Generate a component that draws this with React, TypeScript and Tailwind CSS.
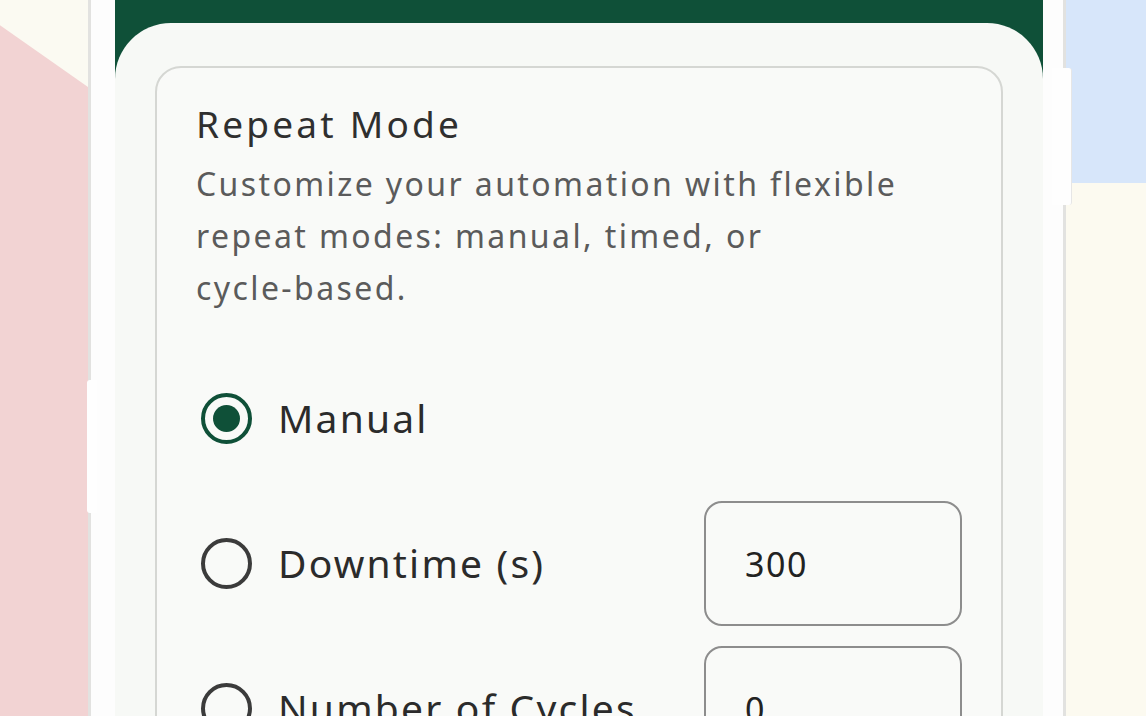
import { useState } from 'react'

type Mode = 'manual' | 'downtime' | 'cycles'

const MODES: { id: Mode; label: string; value?: string }[] = [
  { id: 'manual', label: 'Manual' },
  { id: 'downtime', label: 'Downtime (s)', value: '300' },
  { id: 'cycles', label: 'Number of Cycles', value: '0' },
]

function Radio({ checked }: { checked: boolean }) {
  return (
    <span
      className={`ml-[5px] flex h-[51px] w-[51px] shrink-0 items-center justify-center rounded-full border-[4px] ${
        checked ? 'border-[#0f5038]' : 'border-[#3b3b3b]'
      }`}
    >
      {checked && <span className="h-[27px] w-[27px] rounded-full bg-[#0f5038]" />}
    </span>
  )
}

export default function App() {
  const [mode, setMode] = useState<Mode>('manual')

  return (
    <div className="flex h-[716px] w-[1146px] overflow-hidden bg-[#fbfaf2] font-['Noto_Sans',sans-serif]">
      {/* left backdrop */}
      <div className="w-[88px] shrink-0 bg-[#f2d3d3]">
        <div className="h-[87px] bg-[#fbfaf2] [clip-path:polygon(0_0,100%_0,100%_100%,0_29%)]" />
      </div>

      {/* phone */}
      <div className="relative flex-1 border-x-[3px] border-[#e2e2e0] bg-[#fdfdfd] pl-[24px] pr-[20px]">
        <div className="absolute left-[-4px] top-[380px] h-[133px] w-[10px] rounded-l-[3px] bg-[#fefefe]" />
        <div className="absolute right-[-9px] top-[68px] h-[137px] w-[20px] rounded-r-[3px] border-r border-[#e6e6e6] bg-[#fefefe]" />

        <div className="h-full bg-[#0f5038] pt-[23px]">
          <div className="h-full rounded-t-[56px] bg-[#f7f9f6] px-[40px] pt-[43px]">
            <div className="rounded-[26px] border-2 border-[#d5d7d3] bg-[#f9faf8] px-[39px] pt-[34px] pb-[40px]">
              <h2 className="text-[37px] leading-[44px] tracking-[3.2px] text-[#2f2f2f]">Repeat Mode</h2>
              <p className="mt-[12px] max-w-[740px] text-[32px] leading-[52px] tracking-[2.4px] text-[#5b5b5b]">
                Customize your automation with flexible repeat modes: manual, timed, or{' '}
                <span className="whitespace-nowrap">cycle-based.</span>
              </p>

              <div className="mt-[42px] flex flex-col gap-[20px]">
                {MODES.map(m => (
                  <div key={m.id} className="flex h-[125px] items-center justify-between">
                    <button onClick={() => setMode(m.id)} className="flex items-center">
                      <Radio checked={mode === m.id} />
                      <span className="ml-[26px] text-[39px] tracking-[2.2px] text-[#2b2b2b]">{m.label}</span>
                    </button>
                    {m.value !== undefined && (
                      <input
                        defaultValue={m.value}
                        className="h-[125px] w-[258px] rounded-[18px] border-2 border-[#8d8d8d] bg-transparent pl-[39px] text-[34px] tracking-[1.6px] text-[#222] outline-none"
                      />
                    )}
                  </div>
                ))}
              </div>
            </div>
          </div>
        </div>
      </div>

      {/* right backdrop */}
      <div className="flex w-[80px] shrink-0 flex-col">
        <div className="h-[183px] bg-[#d7e6fa]" />
        <div className="flex-1 bg-[#fcfaf0]" />
      </div>
    </div>
  )
}
